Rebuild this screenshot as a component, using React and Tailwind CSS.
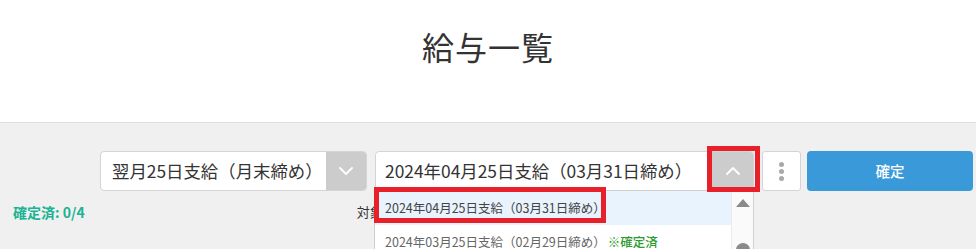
import React from "react";

function Chevron({ up = false }) {
  return (
    <svg width="16" height="10" viewBox="0 0 16 10" fill="none">
      <path
        d={up ? "M2 8 L8 2 L14 8" : "M2 2 L8 8 L14 2"}
        stroke="white"
        strokeWidth="1.8"
        strokeLinecap="round"
        strokeLinejoin="round"
      />
    </svg>
  );
}

export default function App() {
  return (
    <div className="relative w-[976px] h-[249px] overflow-hidden bg-[#f0f0f0] font-['Noto_Sans_CJK_JP','Noto_Sans',sans-serif] text-[#333]">
      <header className="h-[123px] bg-white border-b border-[#dedede] flex justify-center">
        <h1 className="mt-[26px] text-[32px] leading-[40px] tracking-[1px] text-[#333]">給与一覧</h1>
      </header>

      <div className="pt-[28px] pr-[3px]">
        <div className="flex justify-end items-start h-[40px] gap-[8px]">
          {/* select 1 */}
          <div className="w-[267px] h-[40px] flex bg-white border border-[#d4d4d4] rounded-[4px] overflow-hidden">
            <div className="flex-1 flex items-center pl-[11px] text-[17.4px] text-[#333]">翌月25日支給（月末締め）</div>
            <div className="w-[40px] bg-[#cccccc] flex items-center justify-center">
              <Chevron />
            </div>
          </div>

          {/* select 2 */}
          <div className="relative w-[379px] h-[40px]">
            <div className="w-full h-full flex bg-white border border-[#d4d4d4] rounded-[4px] overflow-hidden">
              <div className="flex-1 flex items-center pl-[9px] text-[17.4px] text-[#333]">2024年04月25日支給（03月31日締め）</div>
              <div className="w-[41px] bg-[#cccccc] flex items-center justify-center">
                <Chevron up />
              </div>
            </div>

            {/* dropdown */}
            <div className="absolute left-[-1px] top-[39px] w-[380px] h-[80px] bg-white border border-[#cfcfcf] z-10 flex">
              <div className="flex-1 flex flex-col">
                <div className="h-[34px] bg-[#e9f3fd] flex items-center pl-[10px] text-[12.5px] text-[#444]">2024年04月25日支給（03月31日締め）</div>
                <div className="h-[34px] flex items-center pl-[10px] text-[12.5px] text-[#666]">
                  2024年03月25日支給（02月29日締め）<span className="ml-[2px] text-[#2e9b2e] font-medium">※確定済</span>
                </div>
              </div>
              <div className="relative w-[22px] bg-[#fafafa] border-l border-[#ececec]">
                <svg className="absolute left-[3px] top-[7px]" width="16" height="10" viewBox="0 0 16 10">
                  <path d="M8 1 L15 9 L1 9 Z" fill="#8a8a8a" />
                </svg>
                <div className="absolute left-[4px] top-[52px] w-[14px] h-[20px] rounded-full bg-[#8a8a8a]" />
              </div>
            </div>

            {/* annotation boxes */}
            <div className="absolute left-[-1px] top-[36px] w-[232px] h-[36px] border-[5px] border-[#e8202a] z-20 pointer-events-none" />
            <div className="absolute left-[332px] top-[-5px] w-[53px] h-[46px] border-[5px] border-[#e8202a] z-20 pointer-events-none" />
          </div>

          {/* kebab */}
          <div className="w-[39px] h-[40px] bg-white border border-[#d4d4d4] rounded-[3px] flex flex-col items-center justify-center gap-[2px]">
            <span className="w-[5px] h-[5px] rounded-full bg-[#a9a9a9]" />
            <span className="w-[5px] h-[5px] rounded-full bg-[#a9a9a9]" />
            <span className="w-[5px] h-[5px] rounded-full bg-[#a9a9a9]" />
          </div>

          {/* confirm */}
          <button className="w-[166px] h-[40px] ml-[-2px] bg-[#3a9ad9] rounded-[4px] text-white text-[14.5px] font-medium flex items-center justify-center">確定</button>
        </div>

        <div className="flex items-center mt-[11px] h-[20px]">
          <div className="pl-[13px] text-[14px] font-bold text-[#1ab394]">確定済: 0/4</div>
          <div className="ml-[272px] text-[13px] text-[#333]">対象期間</div>
        </div>
      </div>
    </div>
  );
}
